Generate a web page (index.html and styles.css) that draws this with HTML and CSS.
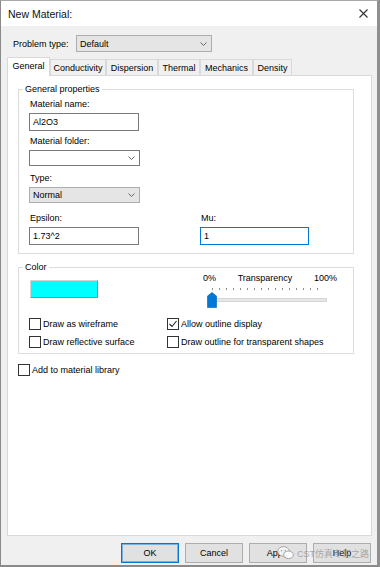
FILE: index.html
```html
<!DOCTYPE html>
<html>
<head>
<meta charset="utf-8">
<link rel="stylesheet" href="styles.css">
</head>
<body>
<div class="window">
  <div class="titlebar">
    <span class="title">New Material:</span>
    <svg class="close" viewBox="0 0 9 9"><path d="M0.5 0.5 L8.5 8.5 M8.5 0.5 L0.5 8.5" stroke="#333" stroke-width="1.1" fill="none"/></svg>
  </div>
  <div class="body">
    <div class="ptype">
      <span class="lbl">Problem type:</span>
      <div class="combo gray"><span>Default</span><svg class="chev" viewBox="0 0 7 4"><polyline points="0.5,0.5 3.5,3.5 6.5,0.5" fill="none" stroke="#666" stroke-width="1"/></svg></div>
    </div>
    <div class="tabs">
      <div class="tab active t1">General</div>
      <div class="tab t2">Conductivity</div>
      <div class="tab t3">Dispersion</div>
      <div class="tab t4">Thermal</div>
      <div class="tab t5">Mechanics</div>
      <div class="tab t6">Density</div>
    </div>
    <div class="panel">
      <fieldset class="group gp">
        <legend>General properties</legend>
        <div class="inner">
          <div class="field">
            <label>Material name:</label>
            <div class="input">Al2O3</div>
          </div>
          <div class="field f-folder">
            <label>Material folder:</label>
            <div class="combo white"><span></span><svg class="chev" viewBox="0 0 7 4"><polyline points="0.5,0.5 3.5,3.5 6.5,0.5" fill="none" stroke="#666" stroke-width="1"/></svg></div>
          </div>
          <div class="field f-type">
            <label>Type:</label>
            <div class="combo gray small"><span>Normal</span><svg class="chev" viewBox="0 0 7 4"><polyline points="0.5,0.5 3.5,3.5 6.5,0.5" fill="none" stroke="#666" stroke-width="1"/></svg></div>
          </div>
          <div class="pair">
            <div class="field">
              <label>Epsilon:</label>
              <div class="input">1.73^2</div>
            </div>
            <div class="field">
              <label>Mu:</label>
              <div class="input focus">1</div>
            </div>
          </div>
        </div>
      </fieldset>
      <fieldset class="group cg">
        <legend>Color</legend>
        <div class="inner">
          <div class="toprow">
            <div class="swatch"></div>
            <div class="trans">
              <div class="tlabels"><span>0%</span><span>Transparency</span><span>100%</span></div>
              <div class="ticks"></div>
              <div class="slider">
                <div class="track"></div>
                <svg class="thumb" viewBox="0 0 10 16"><path d="M0.5 4 L5 0.5 L9.5 4 V15.5 H0.5 Z" fill="#0078d7" stroke="#005fb0" stroke-width="0.6"/></svg>
              </div>
            </div>
          </div>
          <div class="checks">
            <div class="check"><span class="box"></span><span>Draw as wireframe</span></div>
            <div class="check"><span class="box"><svg viewBox="0 0 10 10"><polyline points="1.5,5 4,7.5 8.5,2" fill="none" stroke="#222" stroke-width="1.1"/></svg></span><span>Allow outline display</span></div>
            <div class="check"><span class="box"></span><span>Draw reflective surface</span></div>
            <div class="check"><span class="box"></span><span>Draw outline for transparent shapes</span></div>
          </div>
        </div>
      </fieldset>
      <div class="check add"><span class="box"></span><span>Add to material library</span></div>
    </div>
    <div class="buttons">
      <div class="btn default">OK</div>
      <div class="btn">Cancel</div>
      <div class="btn">Apply</div>
      <div class="btn">Help</div>
    </div>
  </div>
  <div class="watermark">
    <svg class="wx" viewBox="0 0 17 14"><ellipse cx="6.5" cy="5.5" rx="5.8" ry="4.8" fill="rgba(255,255,255,0.85)" stroke="#9a9a9a" stroke-width="0.9"/><ellipse cx="11.5" cy="8.8" rx="4.8" ry="3.8" fill="rgba(255,255,255,0.9)" stroke="#9a9a9a" stroke-width="0.9"/><circle cx="4.5" cy="4.5" r="0.7" fill="#9a9a9a"/><circle cx="8.3" cy="4.5" r="0.7" fill="#9a9a9a"/></svg>
    <span>CST仿真专家之路</span>
  </div>
</div>
</body>
</html>
```
FILE: styles.css
```css
* { box-sizing: border-box; }
html, body { margin: 0; padding: 0; }
body {
  width: 380px;
  height: 567px;
  overflow: hidden;
  font-family: "Liberation Sans", Arial, sans-serif;
  font-size: 9px;
  color: #000;
  background: #fff;
}
.window {
  position: relative;
  width: 380px;
  height: 567px;
  display: flex;
  flex-direction: column;
  border-top: 1px solid #a8a8a8;
  border-left: 1px solid #8a8a8a;
  border-right: 3px solid #8f8f8f;
  border-bottom: 2px solid #8a8a8a;
  background: #f0f0f0;
}
.titlebar {
  flex: none;
  height: 25px;
  background: #fff;
  display: flex;
  align-items: center;
  justify-content: space-between;
  padding: 0 9px 0 7px;
}
.title { font-size: 10.5px; color: #111; }
.close { width: 9px; height: 9px; display: block; }

.body {
  flex: 1;
  min-height: 0;
  display: flex;
  flex-direction: column;
  padding: 9px 5px 2px 6px;
}
.ptype {
  flex: none;
  display: flex;
  align-items: center;
  height: 17px;
}
.ptype .lbl { margin-left: 6px; width: 63px; }
.combo {
  display: flex;
  align-items: center;
  justify-content: space-between;
  padding: 0 4px 0 3px;
}
.ptype .combo { width: 136px; height: 17px; }
.combo.gray { background: #e5e5e5; border: 1px solid #adadad; }
.combo.white { background: #fff; border: 1px solid #7a7a7a; width: 111px; height: 16px; }
.combo.small { width: 111px; height: 16px; }
.chev { width: 7px; height: 4px; display: block; }

.tabs {
  flex: none;
  position: relative;
  z-index: 1;
  display: flex;
  align-items: flex-end;
  height: 18px;
  margin-top: 5px;
}
.tab {
  height: 16px;
  border: 1px solid #d9d9d9;
  border-bottom: none;
  background: #f0f0f0;
  display: flex;
  align-items: center;
  justify-content: center;
  white-space: nowrap;
}
.tab.active {
  height: 19px;
  margin-bottom: -1px;
  padding-bottom: 3px;
  background: #fff;
}
.t1 { width: 43px; }
.t2 { width: 56px; }
.t3 { width: 52px; }
.t4 { width: 42px; }
.t5 { width: 53px; }
.t6 { width: 39px; }

.panel {
  flex: 1;
  min-height: 0;
  background: #fff;
  border: 1px solid #d9d9d9;
  padding: 8px 17px 0 10px;
}
.group {
  margin: 0;
  padding: 0;
  min-width: 0;
  border: 1px solid #dcdcdc;
}
.group legend {
  padding: 0 2px;
  margin-left: 4px;
  line-height: 10px;
  font-size: 9px;
}
.gp .inner { padding: 4px 10px 8px 10px; }
.field label {
  display: block;
  height: 12px;
  line-height: 12px;
  margin-bottom: 3px;
  padding-left: 1px;
}
.input {
  width: 110px;
  height: 18px;
  border: 1px solid #7a7a7a;
  background: #fff;
  padding: 0 3px;
  display: flex;
  align-items: center;
}
.input.focus { border-color: #0078d7; width: 109px; }
.f-folder { margin-top: 4px; }
.f-type { margin-top: 6px; }
.pair {
  margin-top: 9px;
  display: grid;
  grid-template-columns: 171px 1fr;
}

.cg { margin-top: 8px; }
.cg .inner { padding: 0 16px 5px 10px; }
.toprow { display: flex; align-items: flex-start; }
.swatch {
  margin: 8px 0 0 1px;
  width: 68px;
  height: 18px;
  background: #00ffff;
  border: 1px solid;
  border-color: #d4d4d4 #8c8c8c #8c8c8c #d4d4d4;
}
.trans { margin-left: auto; width: 134px; }
.tlabels {
  display: flex;
  justify-content: space-between;
  line-height: 12px;
}
.ticks {
  margin: 4px 0 0 9px;
  width: 112px;
  height: 2px;
  background: repeating-linear-gradient(to right, #8a8a8a 0 1px, transparent 1px 7px);
}
.slider {
  position: relative;
  height: 16px;
  margin-top: 2px;
  padding: 6px 0 0 7px;
}
.track {
  width: 117px;
  height: 4px;
  background: #e7e7e7;
  border: 1px solid #d6d6d6;
}
.thumb {
  position: absolute;
  left: 4px;
  top: 0;
  width: 10px;
  height: 16px;
}
.checks {
  display: grid;
  grid-template-columns: 138px auto;
  row-gap: 6px;
  margin-top: 10px;
}
.check {
  display: flex;
  align-items: center;
  gap: 2px;
  height: 12px;
  white-space: nowrap;
}
.box {
  flex: none;
  width: 12px;
  height: 12px;
  border: 1px solid #333;
  background: #fff;
  display: flex;
}
.box svg { width: 10px; height: 10px; }
.add { margin-top: 10px; }

.buttons {
  flex: none;
  display: flex;
  justify-content: flex-end;
  gap: 6px;
  height: 20px;
  margin-top: 7px;
  margin-right: 1px;
}
.btn {
  width: 58px;
  height: 20px;
  border: 1px solid #adadad;
  background: #e1e1e1;
  display: flex;
  align-items: center;
  justify-content: center;
}
.btn.default {
  border-color: #0078d7;
  box-shadow: inset 0 0 0 1px rgba(0, 120, 215, 0.45);
}
.watermark {
  position: absolute;
  left: 276px;
  top: 545px;
  display: flex;
  align-items: center;
  gap: 3px;
  font-family: "Liberation Sans", "Noto Sans CJK SC", sans-serif;
  font-size: 9px;
  color: rgba(150, 150, 150, 0.8);
}
.wx { width: 17px; height: 14px; display: block; }
```
